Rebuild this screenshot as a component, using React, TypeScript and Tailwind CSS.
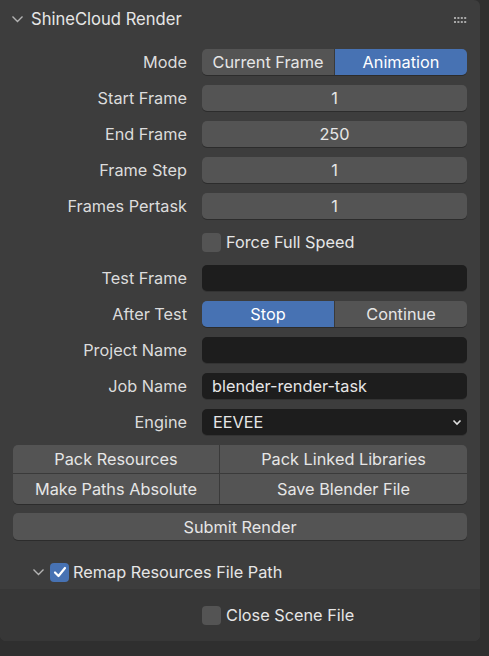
import React from 'react';

const font = { fontFamily: 'Inter, "Noto Sans", sans-serif' };

function Chevron({ className }: { className?: string }) {
  return (
    <svg width="13" height="8" viewBox="0 0 13 8" className={className}>
      <polyline points="1.5,1.5 6.5,6.5 11.5,1.5" fill="none" stroke="#b4b4b4" strokeWidth="1.4" />
    </svg>
  );
}

function Grip() {
  const dots = [];
  for (let r = 0; r < 2; r++) {
    for (let c = 0; c < 4; c++) {
      dots.push(<rect key={`${r}-${c}`} x={c * 3.4} y={r * 4} width="2" height="2" fill="#a8a8a8" />);
    }
  }
  return (
    <svg width="13" height="6" viewBox="0 0 13 6">
      {dots}
    </svg>
  );
}

function Row({ label, children }: { label: string; children: React.ReactNode }) {
  return (
    <div className="flex h-[36px] items-center">
      <div className="w-[187px] text-right text-[16.3px] pt-[1px] text-[#dcdcdc]">{label}</div>
      <div className="ml-[15px] w-[265px]">{children}</div>
    </div>
  );
}

function NumField({ value }: { value: string }) {
  return (
    <div className="h-[26px] rounded-[5px] bg-[#545454] shadow-[0_1px_0_#2c2c2c] flex items-center justify-center pt-[1px] text-[16.3px] text-[#e6e6e6]">
      {value}
    </div>
  );
}

function TextField({ value }: { value?: string }) {
  return (
    <div className="h-[26px] rounded-[5px] bg-[#1d1d1d] shadow-[0_1px_0_#333333] flex items-center pl-[10px] pt-[1px] text-[16.3px] text-[#e6e6e6]">
      {value}
    </div>
  );
}

function Toggle({ left, right, active }: { left: string; right: string; active: 'left' | 'right' }) {
  const on = 'bg-[#4772b3] text-white';
  const off = 'bg-[#545454] text-[#e6e6e6]';
  return (
    <div className="flex h-[26px] rounded-[5px] overflow-hidden shadow-[0_1px_0_#2c2c2c] text-[16.3px]">
      <div className={`flex-1 flex items-center justify-center pt-[1px] border-r border-[#3a3a3a] ${active === 'left' ? on : off}`}>{left}</div>
      <div className={`flex-1 flex items-center justify-center pt-[1px] ${active === 'right' ? on : off}`}>{right}</div>
    </div>
  );
}

function CheckBox({ checked, label, gap = 'gap-[5px]' }: { checked?: boolean; label: string; gap?: string }) {
  return (
    <div className={`flex items-center ${gap}`}>
      <div className={`w-[19px] h-[19px] rounded-[4px] flex items-center justify-center ${checked ? 'bg-[#4772b3]' : 'bg-[#545454]'}`}>
        {checked && (
          <svg width="14" height="12" viewBox="0 0 14 12">
            <polyline points="2,6.5 5.5,10 12,2" fill="none" stroke="white" strokeWidth="2.2" strokeLinecap="round" strokeLinejoin="round" />
          </svg>
        )}
      </div>
      <span className="text-[16.3px] text-[#e6e6e6]">{label}</span>
    </div>
  );
}

export default function App() {
  return (
    <div className="w-[489px] h-[656px] bg-[#2f2f2f] flex" style={font}>
      <div className="w-[480px] self-start flex flex-col bg-[#3d3d3d] rounded-tr-[6px] rounded-b-[6px] overflow-hidden">
        {/* Header */}
        <div className="h-[38px] flex items-center pl-[11px] pr-[13px]">
          <Chevron />
          <span className="ml-[7px] text-[16.6px] text-[#e6e6e6]">ShineCloud Render</span>
          <div className="ml-auto pt-[1px]">
            <Grip />
          </div>
        </div>

        <div className="pt-[6px]">
          <Row label="Mode"><Toggle left="Current Frame" right="Animation" active="right" /></Row>
          <Row label="Start Frame"><NumField value="1" /></Row>
          <Row label="End Frame"><NumField value="250" /></Row>
          <Row label="Frame Step"><NumField value="1" /></Row>
          <Row label="Frames Pertask"><NumField value="1" /></Row>
          <Row label=""><CheckBox label="Force Full Speed" /></Row>
          <Row label="Test Frame"><TextField /></Row>
          <Row label="After Test"><Toggle left="Stop" right="Continue" active="left" /></Row>
          <Row label="Project Name"><TextField /></Row>
          <Row label="Job Name"><TextField value="blender-render-task" /></Row>
          <Row label="Engine">
            <div className="h-[26px] rounded-[5px] bg-[#1d1d1d] shadow-[0_1px_0_#333333] flex items-center pl-[11px] pr-[5px] text-[16.3px] text-[#e6e6e6]">
              <span className="pt-[1px]">EEVEE</span>
              <svg width="10" height="7" viewBox="0 0 10 7" className="ml-auto">
                <polyline points="1.5,1.5 5,5 8.5,1.5" fill="none" stroke="#e0e0e0" strokeWidth="1.6" />
              </svg>
            </div>
          </Row>
        </div>

        {/* Operator buttons */}
        <div className="mt-[5px] ml-[13px] w-[454px] grid grid-cols-[207px_247px] grid-rows-[29px_30px] rounded-[5px] overflow-hidden shadow-[0_1px_0_#2c2c2c] text-[16.3px] text-[#e6e6e6]">
          <div className="bg-[#545454] flex items-center justify-center pt-[1px] border-r border-b border-[#3a3a3a]">Pack Resources</div>
          <div className="bg-[#545454] flex items-center justify-center pt-[1px] border-b border-[#3a3a3a]">Pack Linked Libraries</div>
          <div className="bg-[#545454] flex items-center justify-center pt-[1px] border-r border-[#3a3a3a]">Make Paths Absolute</div>
          <div className="bg-[#545454] flex items-center justify-center pt-[1px]">Save Blender File</div>
        </div>

        <div className="mt-[9px] ml-[13px] w-[454px] h-[27px] rounded-[5px] bg-[#545454] shadow-[0_1px_0_#2c2c2c] flex items-center justify-center pt-[1px] text-[16.3px] text-[#e6e6e6]">
          Submit Render
        </div>

        {/* Sub-panel */}
        <div className="h-[49px] flex items-center pl-[32px] pt-[15px]">
          <Chevron />
          <div className="ml-[5px]">
            <CheckBox checked label="Remap Resources File Path" gap="gap-[4px]" />
          </div>
        </div>
        <div className="h-[52px] bg-[#373737] flex items-center pl-[202px]">
          <CheckBox label="Close Scene File" />
        </div>
      </div>
    </div>
  );
}
